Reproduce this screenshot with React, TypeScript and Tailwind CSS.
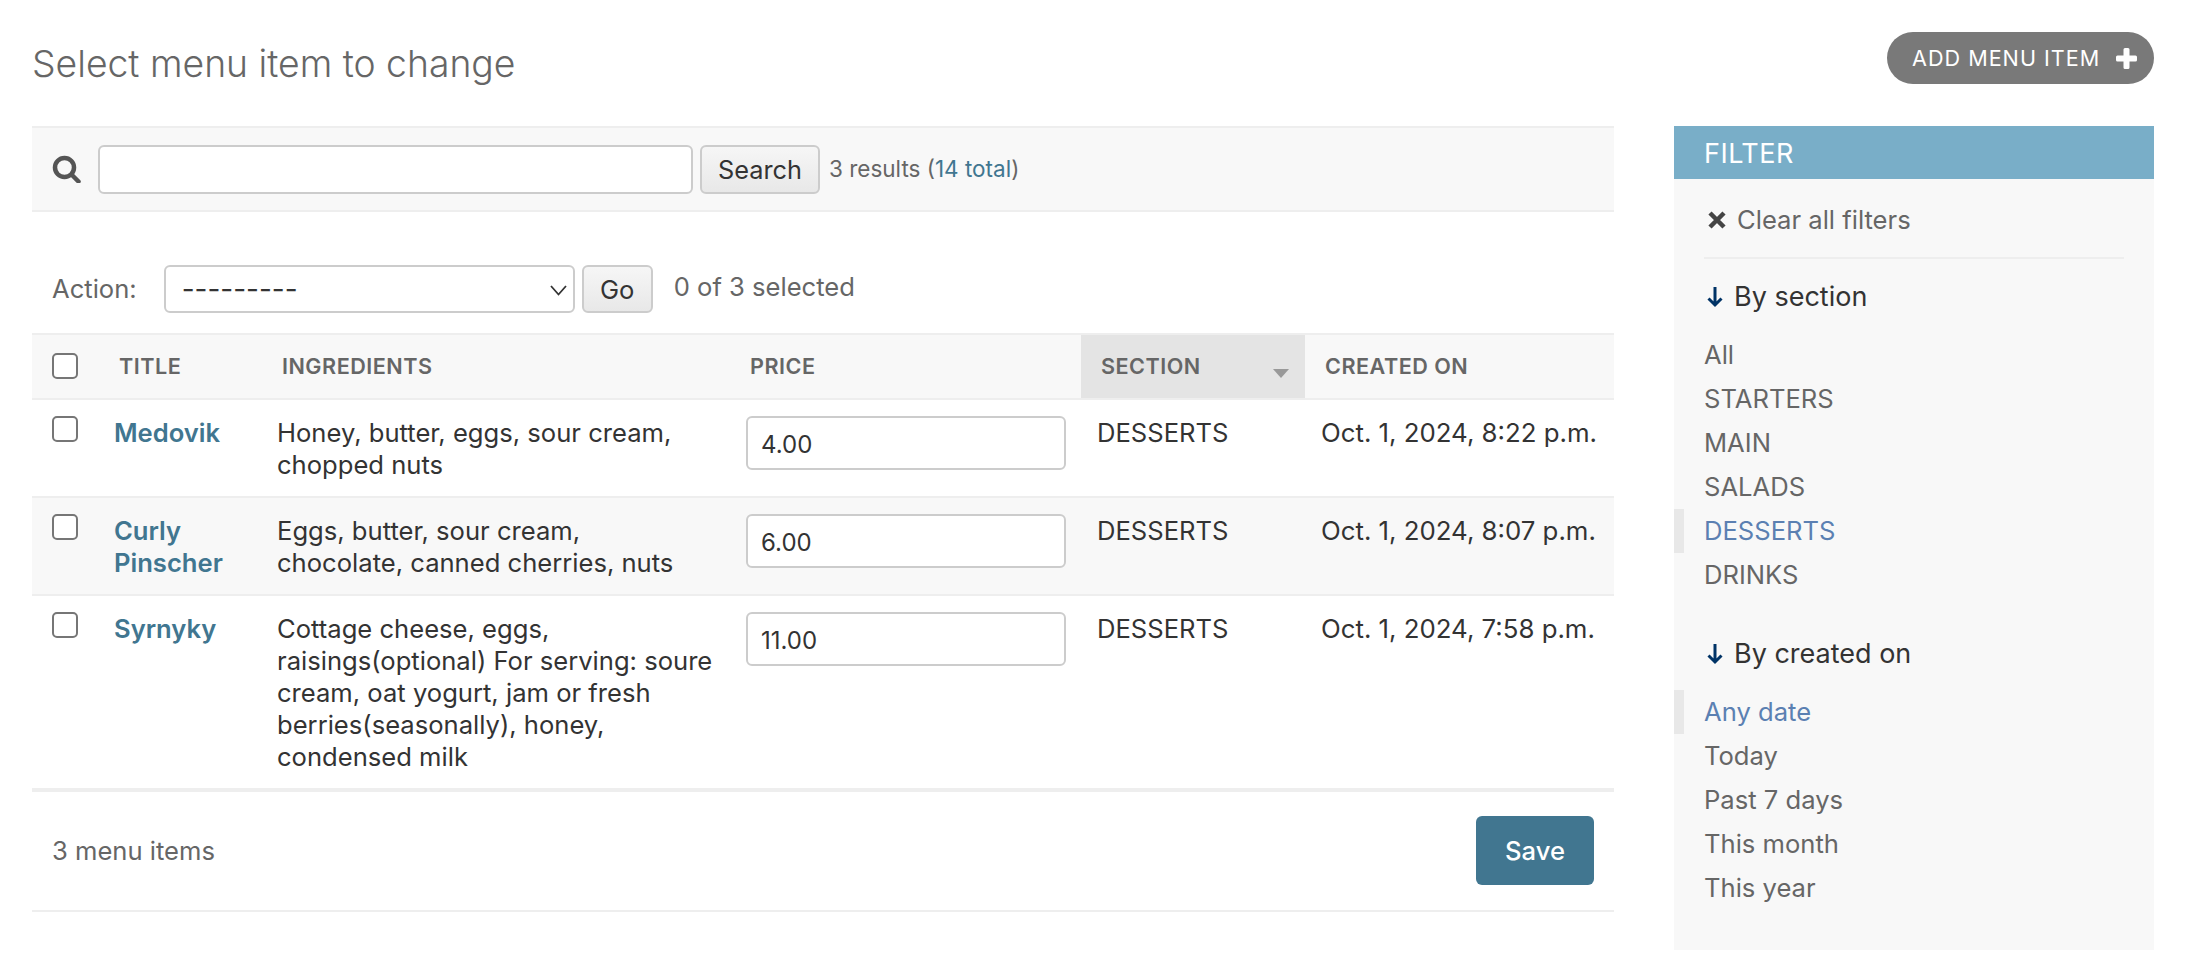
import React from "react";

const rows = [
  { title: "Medovik", ing: "Honey, butter, eggs, sour cream,\nchopped nuts", price: "4.00", date: "Oct. 1, 2024, 8:22 p.m.", alt: false },
  { title: "Curly Pinscher", ing: "Eggs, butter, sour cream,\nchocolate, canned cherries, nuts", price: "6.00", date: "Oct. 1, 2024, 8:07 p.m.", alt: true },
  { title: "Syrnyky", ing: "Cottage cheese, eggs,\nraisings(optional) For serving: soure\ncream, oat yogurt, jam or fresh\nberries(seasonally), honey,\ncondensed milk", price: "11.00", date: "Oct. 1, 2024, 7:58 p.m.", alt: false },
];

function ArrowDown() {
  return (
    <svg width="18" height="22" viewBox="0 0 18 22" fill="none" stroke="#003366" strokeWidth="3" className="shrink-0">
      <path d="M9 1v18M2.500 12.500 9 19l6.500-6.500" />
    </svg>
  );
}

function Choice({ label, selected }: { label: string; selected?: boolean }) {
  return (
    <li className={`h-11 flex items-center pl-[20px] border-l-[10px] ${selected ? "border-[#e8e8e8] text-[#5b80b2]" : "border-transparent text-[#666]"}`}>
      {label}
    </li>
  );
}

export default function App() {
  return (
    <div className="w-[2194px] h-[960px] overflow-hidden bg-white pl-8 pr-10 font-[Inter,sans-serif] text-[25.6px] leading-8 text-[#333]">
      <header className="h-[126px] flex justify-between items-start">
        <h1 className="mt-[42px] text-[37.3px] leading-[44px] font-light text-[#666]">Select menu item to change</h1>
        <a className="mt-8 h-[52px] w-[267px] rounded-full bg-[#797979] text-white text-[21.6px] tracking-[1px] flex items-center pl-[25px] gap-[16px]">
          ADD MENU ITEM
          <svg width="21" height="21" viewBox="0 0 21 21" fill="#fff"><path d="M7.500 1.500a1.500 1.500 0 0 1 1.500-1.500h3a1.500 1.500 0 0 1 1.500 1.500v6h6a1.500 1.500 0 0 1 1.500 1.500v3a1.500 1.500 0 0 1-1.500 1.500h-6v6a1.500 1.500 0 0 1-1.500 1.500h-3a1.500 1.500 0 0 1-1.500-1.500v-6h-6a1.500 1.500 0 0 1-1.500-1.500v-3a1.500 1.500 0 0 1 1.500-1.500h6z" /></svg>
        </a>
      </header>

      <div className="flex gap-[60px] items-start">
        <main className="w-[1582px]">
          <div className="h-[86px] border-y-2 border-[#eee] bg-[#f8f8f8] flex items-center pl-5 text-[22.500px]">
            <svg width="29" height="28" viewBox="0 0 29 28" fill="none" stroke="#555" strokeWidth="4.500" className="mr-[17px]">
              <circle cx="12.500" cy="12.500" r="9.500" />
              <path d="m19.500 19.500 7 7" strokeLinecap="round" />
            </svg>
            <input className="w-[595px] h-[49px] rounded-[6px] border-2 border-[#ccc] bg-white" />
            <button className="ml-[7px] w-[120px] h-[49px] pt-[2px] rounded-[6px] border-2 border-[#ccc] bg-gradient-to-b from-[#f6f6f6] to-[#e8e8e8] text-[25.300px] text-[#333]">Search</button>
            <span className="ml-[9px] text-[#666]">3 results (<a className="text-[#417690]">14 total</a>)</span>
          </div>

          <div className="h-[121px] flex items-center pl-5 pt-[32px] text-[#666]">
            <span>Action:</span>
            <div className="relative ml-[27px]">
              <select className="block appearance-none w-[411px] h-[48px] rounded-[6px] border-2 border-[#ccc] bg-white pl-[16px] text-[28px] text-[#333]">
                <option>---------</option>
              </select>
              <svg width="17" height="11" viewBox="0 0 17 11" fill="none" stroke="#333" strokeWidth="1.800" className="absolute right-[8px] top-[20px] pointer-events-none">
                <path d="m1 1 7.500 8.500L16 1" />
              </svg>
            </div>
            <button className="ml-[7px] w-[71px] h-[48px] pt-[2px] rounded-[6px] border-2 border-[#ccc] bg-gradient-to-b from-[#f6f6f6] to-[#e8e8e8] text-[#333]">Go</button>
            <span className="ml-[21px] -mt-[4px]">0 of 3 selected</span>
          </div>

          <table className="w-full table-fixed border-collapse">
            <colgroup>
              <col className="w-[68px]" />
              <col className="w-[164px]" />
              <col className="w-[469px]" />
              <col className="w-[348px]" />
              <col className="w-[224px]" />
              <col />
            </colgroup>
            <thead>
              <tr className="h-[65px] bg-[#f8f8f8] border-y-2 border-[#eee] text-[21.600px] font-semibold text-[#666] tracking-[0.5px] text-left">
                <th className="pl-5 font-normal">
                  <input type="checkbox" className="block appearance-none w-[26px] h-[26px] rounded-[5px] border-2 border-[#767676] bg-white -mt-[2px]" />
                </th>
                <th className="pl-[19px] pb-[2px] font-semibold">TITLE</th>
                <th className="pl-[18px] pb-[2px] font-semibold">INGREDIENTS</th>
                <th className="pl-[17px] pb-[2px] font-semibold">PRICE</th>
                <th className="pl-5 pb-[2px] font-semibold bg-[#e4e4e4] relative">
                  SECTION
                  <span className="absolute right-[16px] top-[34px] w-0 h-0 border-x-[8px] border-x-transparent border-t-[9px] border-t-[#999]" />
                </th>
                <th className="pl-5 pb-[2px] font-semibold">CREATED ON</th>
              </tr>
            </thead>
            <tbody>
              {rows.map((r, i) => (
                <tr key={r.title} className={`align-top ${r.alt ? "bg-[#f8f8f8]" : "bg-white"} ${i === 2 ? "border-b-[4px]" : "border-b-2"} border-[#eee]`}>
                  <td className="pl-5 pt-[16px]">
                    <input type="checkbox" className="block appearance-none w-[26px] h-[26px] rounded-[5px] border-2 border-[#767676] bg-white" />
                  </td>
                  <td className="pl-[14px] pr-2 pt-[17px] pb-[15px] font-semibold text-[#417690]">{r.title}</td>
                  <td className="pl-[13px] pt-[17px] pb-[15px] whitespace-pre-line">{r.ing}</td>
                  <td className="pl-[13px] pt-[16px]">
                    <input readOnly value={r.price} className="block w-[320px] h-[54px] rounded-[6px] border-2 border-[#ccc] bg-white pl-[13px] pt-[2px] text-[24px] text-[#333]" />
                  </td>
                  <td className="pl-[16px] pt-[17px]">DESSERTS</td>
                  <td className="pl-[16px] pt-[17px] whitespace-nowrap text-[25.8px]">{r.date}</td>
                </tr>
              ))}
            </tbody>
          </table>

          <div className="h-[120px] border-b-2 border-[#eee] flex items-center justify-between pl-5 pr-5 text-[#666]">
            <span>3 menu items</span>
            <button className="w-[118px] h-[69px] mb-[1px] rounded-[6px] bg-[#417690] text-white font-medium">Save</button>
          </div>
        </main>

        <aside className="w-[480px] h-[824px] bg-[#f8f8f8]">
          <h2 className="h-[53px] pt-[2px] bg-[#79aec8] text-white text-[27px] font-normal tracking-[0.5px] pl-[30px] flex items-center">FILTER</h2>
          <div className="mx-[30px] h-[80px] border-b-2 border-[#eee] flex items-center pl-1 text-[#666] pt-[4px]">
            <svg width="18" height="18" viewBox="0 0 18 18" stroke="#444" strokeWidth="4.500" fill="none" className="mr-[11px]"><path d="m2 2 14 14M16 2 2 16" /></svg>
            Clear all filters
          </div>
          <h3 className="h-[74px] pt-[2px] flex items-center pl-8 gap-[10px] text-[27px] font-normal text-[#333]"><ArrowDown />By section</h3>
          <ul>
            {["All", "STARTERS", "MAIN", "SALADS"].map((l) => <Choice key={l} label={l} />)}
            <Choice label="DESSERTS" selected />
            <Choice label="DRINKS" />
          </ul>
          <h3 className="h-[93px] flex items-center pl-8 gap-[10px] text-[27px] font-normal text-[#333] pt-[20px]"><ArrowDown />By created on</h3>
          <ul>
            <Choice label="Any date" selected />
            {["Today", "Past 7 days", "This month", "This year"].map((l) => <Choice key={l} label={l} />)}
          </ul>
        </aside>
      </div>
    </div>
  );
}
